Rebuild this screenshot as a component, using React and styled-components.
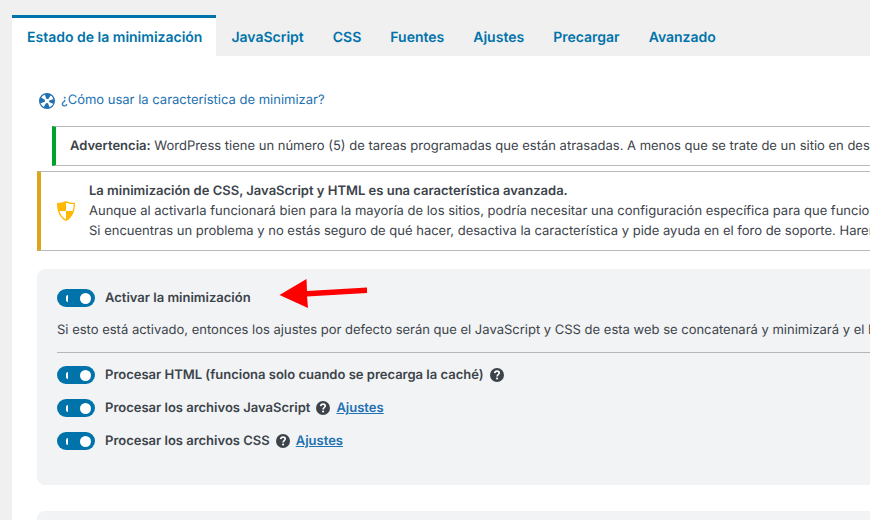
import React, { useState } from "react";
import styled, { createGlobalStyle } from "styled-components";

const GlobalStyle = createGlobalStyle`
  * {
    box-sizing: border-box;
  }

  body {
    margin: 0;
    overflow-x: hidden;
    background: #f0f0f0;
    color: #3c434a;
    font-family: Inter, "Liberation Sans", sans-serif;
    font-size: 13px;
    line-height: 20px;
    text-rendering: geometricPrecision;
    scrollbar-width: none;
  }

  strong {
    font-weight: 600;
  }
`;

const Page = styled.div`
  display: flex;
  flex-direction: column;
  min-height: 100vh;
  padding: 15px 0 0 12px;
`;

const Tabs = styled.nav`
  display: flex;
`;

const Tab = styled.a`
  padding: 10px 14px 8px 15px;
  border-top: 3px solid ${(props) => (props.$active ? "#0073aa" : "transparent")};
  background: ${(props) => (props.$active ? "#fff" : "transparent")};
  color: #0073aa;
  font-size: 14px;
  font-weight: 600;
  white-space: nowrap;
  text-decoration: none;
`;

const Content = styled.main`
  flex: 1;
  padding: 34px 0 0 25px;
  background: #fff;
`;

const HelpLink = styled.a`
  display: flex;
  width: fit-content;
  align-items: center;
  gap: 6px;
  margin: 0 0 16px 2px;
  color: #2271b1;
  text-decoration: none;

  svg {
    margin-top: 2px;
  }
`;

const Notice = styled.div`
  display: flex;
  align-items: center;
  gap: 14px;
  margin: ${(props) => (props.$inset ? "0 0 5px 15px" : "0 0 18px")};
  padding: 9px 0 9px ${(props) => (props.$inset ? "14px" : "16px")};
  border: 1px solid #b9babd;
  border-left: 4px solid ${(props) => props.$color};
  border-right: 0;
  overflow: hidden;
  white-space: nowrap;

  p {
    margin: 0;
  }

  svg {
    flex: none;
  }
`;

const Panel = styled.section`
  position: relative;
  min-height: 60px;
  margin-bottom: 26px;
  padding: 19px 0 34px 20px;
  border-radius: 8px 0 0 8px;
  background: #f2f3f5;
`;

const Row = styled.div`
  display: flex;
  align-items: center;
  gap: 6px;
  margin-bottom: ${(props) => (props.$last ? "0" : "13px")};

  a {
    color: #2271b1;
    font-weight: 600;
  }
`;

const Label = styled.label`
  display: flex;
  align-items: center;
  gap: 10px;
  font-weight: 600;
  white-space: nowrap;
`;

const Switch = styled.input`
  appearance: none;
  display: flex;
  align-items: center;
  justify-content: space-between;
  width: 38px;
  height: 18px;
  margin: 0;
  padding: 0 4px 0 9px;
  border-radius: 9px;
  background: #8c8f94;

  &::before {
    content: "";
    width: 2px;
    height: 7px;
    border-radius: 2px 0 0 2px;
    background: #fff;
  }

  &::after {
    content: "";
    width: 11px;
    height: 11px;
    border-radius: 50%;
    background: #fff;
  }

  &:checked {
    background: #0073aa;
  }

  &:not(:checked) {
    flex-direction: row-reverse;
  }
`;

const Description = styled.p`
  margin: -1px 0 0;
  overflow: hidden;
  white-space: nowrap;
`;

const Divider = styled.hr`
  margin: 12px 0;
  border: 0;
  border-top: 1px solid #b5b6b9;
`;

const HelpButton = styled.button`
  display: flex;
  padding: 0;
  border: 0;
  background: none;
`;

const Arrow = styled.svg`
  position: absolute;
  top: 9px;
  left: 242px;
`;

const tabs = [
  "Estado de la minimización",
  "JavaScript",
  "CSS",
  "Fuentes",
  "Ajustes",
  "Precargar",
  "Avanzado",
];

const options = [
  {
    id: "html",
    name: "Procesar HTML (funciona solo cuando se precarga la caché)",
  },
  { id: "js", name: "Procesar los archivos JavaScript", settings: true },
  { id: "css", name: "Procesar los archivos CSS", settings: true },
];

function LifebuoyIcon() {
  return (
    <svg width="16" height="16" viewBox="0 0 16 16" fill="none">
      <circle cx="8" cy="8" r="7.4" stroke="#2271b1" strokeWidth="1.2" />
      <circle
        cx="8"
        cy="8"
        r="4.7"
        stroke="#2271b1"
        strokeWidth="5"
        strokeDasharray="4.2 3.183"
        strokeDashoffset="2.1"
      />
    </svg>
  );
}

function ShieldIcon() {
  return (
    <svg width="18" height="20" viewBox="0 0 18 20">
      <path
        d="M9 0C6.5 1.3 3.5 1.8 0 1.9C0 9.5 2 16.5 9 20C16 16.5 18 9.5 18 1.9C14.5 1.8 11.5 1.3 9 0Z"
        fill="#ffb900"
      />
      <path d="M9 1.5C11.3 2.5 13.9 3 16.7 3.1C16.6 5.7 16.3 8 15.6 10H9Z" fill="#fff" />
      <path d="M9 10H2.4C3.6 13.7 5.7 16.7 9 18.6Z" fill="#fff" />
    </svg>
  );
}

function HelpIcon() {
  return (
    <svg width="14" height="14" viewBox="0 0 14 14" fill="none">
      <circle cx="7" cy="7" r="7" fill="#3c434a" />
      <path
        d="M4.7 5.2C4.9 3.8 5.8 3.2 7 3.2C8.4 3.2 9.2 4 9.2 5.1C9.2 6.6 7.1 6.7 7.1 8.4"
        stroke="#fff"
        strokeWidth="1.7"
      />
      <circle cx="7.1" cy="10.5" r="1.1" fill="#fff" />
    </svg>
  );
}

function Option({ option }) {
  const [checked, setChecked] = useState(true);

  return (
    <Row $last={option.id === "css"}>
      <Label>
        <Switch
          type="checkbox"
          checked={checked}
          onChange={() => setChecked(!checked)}
        />
        {option.name}
      </Label>
      <HelpButton type="button" aria-label="Ayuda">
        <HelpIcon />
      </HelpButton>
      {option.settings && <a href={"#" + option.id}>Ajustes</a>}
    </Row>
  );
}

function App() {
  const [active, setActive] = useState(tabs[0]);
  const [enabled, setEnabled] = useState(true);

  return (
    <Page>
      <GlobalStyle />
      <Tabs>
        {tabs.map((name) => (
          <Tab
            key={name}
            href="#"
            $active={name === active}
            onClick={() => setActive(name)}
          >
            {name}
          </Tab>
        ))}
      </Tabs>
      <Content>
        <HelpLink href="#ayuda">
          <LifebuoyIcon />
          ¿Cómo usar la característica de minimizar?
        </HelpLink>
        <Notice $inset $color="#00a32a">
          <p>
            <strong>Advertencia:</strong> WordPress tiene un número (5) de
            tareas programadas que están atrasadas. A menos que se trate de un
            sitio en desarrollo
          </p>
        </Notice>
        <Notice $color="#dba617">
          <ShieldIcon />
          <div>
            <p>
              <strong>
                La minimización de CSS, JavaScript y HTML es una característica
                avanzada.
              </strong>
            </p>
            <p>
              Aunque al activarla funcionará bien para la mayoría de los sitios,
              podría necesitar una configuración específica para que funcione
            </p>
            <p>
              Si encuentras un problema y no estás seguro de qué hacer,
              desactiva la característica y pide ayuda en el foro de soporte.
              Haremos
            </p>
          </div>
        </Notice>
        <Panel>
          <Row>
            <Label>
              <Switch
                type="checkbox"
                checked={enabled}
                onChange={() => setEnabled(!enabled)}
              />
              Activar la minimización
            </Label>
          </Row>
          <Description>
            Si esto está activado, entonces los ajustes por defecto serán que el
            JavaScript y CSS de esta web se concatenará y minimizará y el HTML
          </Description>
          <Divider />
          {options.map((option) => (
            <Option key={option.id} option={option} />
          ))}
          <Arrow width="90" height="32" viewBox="0 0 90 32" fill="#f00">
            <path d="M0.5 17L27.5 1L28 13L88 9.5V15L28 18.5L29 30Z" />
          </Arrow>
        </Panel>
        <Panel />
      </Content>
    </Page>
  );
}

export default App;
